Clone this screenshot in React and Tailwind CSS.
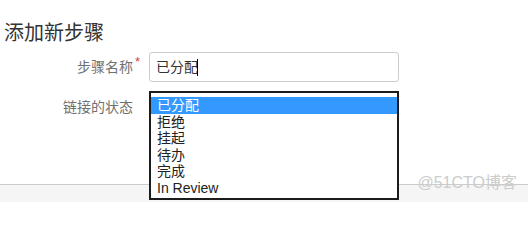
import React from "react";

const font = { fontFamily: '"Liberation Sans", "Noto Sans CJK SC", sans-serif' };

export default function App() {
  const items = ["已分配", "拒绝", "挂起", "待办", "完成", "In Review"];
  return (
    <div
      className="relative w-[528px] h-[202px] overflow-hidden bg-white flex flex-col"
      style={font}
    >
      <h2 className="pl-[4px] pt-[19px] text-[20px] leading-[28px] font-normal text-[#333333]">
        添加新步骤
      </h2>

      <div className="mt-[5px] flex items-center">
        <label className="relative w-[133px] text-right text-[14px] leading-[30px] text-[#707070]">
          步骤名称
          <span className="absolute right-[-7px] top-[-5px] text-[13px] text-[#d04437]">*</span>
        </label>
        <div className="ml-[16px] w-[250px] h-[30px] rounded-[3px] border border-[#cccccc] bg-white flex items-center pl-[6px] text-[14px] text-[#333333]">
          <span>已分配</span>
          <span className="ml-[-1px] w-px h-[17px] bg-black"></span>
        </div>
      </div>

      <div className="mt-[9px] flex items-start">
        <label className="w-[133px] text-right text-[14px] leading-[20px] pt-[6px] text-[#707070]">
          链接的状态
        </label>
        <div className="relative ml-[16px] w-[250px] h-[20px]">
          <ul className="absolute left-0 top-0 z-10 w-[250px] h-[109px] border-2 border-[#1c1c1c] bg-white pt-[4px]">
            {items.map((it, i) => (
              <li
                key={it}
                className={
                  i === 0
                    ? "h-[16.5px] leading-[16.5px] pl-[6px] text-[14px] bg-[#3399ff] text-white"
                    : "h-[16.5px] leading-[16.5px] pl-[6px] text-[14px] text-[#222222]"
                }
              >
                {it}
              </li>
            ))}
          </ul>
        </div>
      </div>

      <div className="mt-auto h-[18px] border-t border-[#cccccc] bg-[#f5f5f5]"></div>

      <span className="absolute right-[11px] bottom-[9px] text-[16px] leading-[20px] text-[#cccccc]">
        @51CTO博客
      </span>
    </div>
  );
}
